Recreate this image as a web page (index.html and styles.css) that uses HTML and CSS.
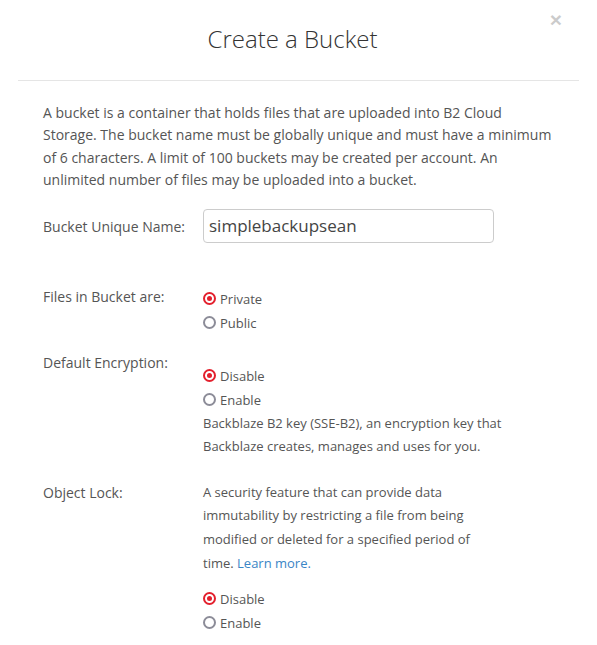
FILE: index.html
```html
<!DOCTYPE html>
<html lang="en">
<head>
<meta charset="utf-8">
<title>Create a Bucket</title>
<link rel="stylesheet" href="styles.css">
</head>
<body>
<div class="modal">
  <div class="modal-header">
    <h1 class="title">Create a Bucket</h1>
    <span class="close">×</span>
  </div>
  <div class="modal-body">
    <p class="intro">A bucket is a container that holds files that are uploaded into B2 Cloud Storage. The bucket name must be globally unique and must have a minimum of 6 characters. A limit of 100 buckets may be created per account. An unlimited number of files may be uploaded into a bucket.</p>

    <div class="row row-name">
      <div class="label">Bucket Unique Name:</div>
      <div class="control"><div class="input">simplebackupsean</div></div>
    </div>

    <div class="row row-files">
      <div class="label">Files in Bucket are:</div>
      <div class="control">
        <div class="radio"><span class="dot checked"></span>Private</div>
        <div class="radio"><span class="dot"></span>Public</div>
      </div>
    </div>

    <div class="row row-enc">
      <div class="label">Default Encryption:</div>
      <div class="control control-enc">
        <div class="radio"><span class="dot checked"></span>Disable</div>
        <div class="radio"><span class="dot"></span>Enable</div>
        <p class="desc desc-enc">Backblaze B2 key (SSE-B2), an encryption key that Backblaze creates, manages and uses for you.</p>
      </div>
    </div>

    <div class="row row-lock">
      <div class="label">Object Lock:</div>
      <div class="control">
        <p class="desc desc-lock">A security feature that can provide data immutability by restricting a file from being modified or deleted for a specified period of time. <a class="link" href="#">Learn more.</a></p>
        <div class="radios-lock">
          <div class="radio"><span class="dot checked"></span>Disable</div>
          <div class="radio"><span class="dot"></span>Enable</div>
        </div>
      </div>
    </div>
  </div>
</div>
</body>
</html>
```
FILE: styles.css
```css
* { box-sizing: border-box; }
html, body {
  margin: 0;
  padding: 0;
  background: #fff;
}
body {
  font-family: "Open Sans", "Liberation Sans", sans-serif;
  font-size: 14px;
  color: #555;
}
.modal {
  padding: 0 18px;
}
.modal-header {
  position: relative;
  height: 81px;
  border-bottom: 1px solid #e5e5e5;
  display: flex;
  justify-content: center;
}
.title {
  margin: 23px 12px 0 0;
  font-size: 24px;
  font-weight: 300;
  line-height: 32px;
  color: #333;
}
.close {
  position: absolute;
  right: 17px;
  top: 6px;
  font-size: 21px;
  font-weight: 700;
  line-height: 28px;
  color: #000;
  opacity: 0.2;
  font-family: "Liberation Sans", "Open Sans", sans-serif;
}
.modal-body {
  padding: 0 20px 0 25px;
}
.intro {
  margin: 21px 0 0;
  line-height: 22.4px;
}
.row {
  display: flex;
}
.label {
  width: 160px;
  flex: none;
  line-height: 20px;
}
.control {
  flex: 1;
  font-size: 13px;
}
.row-name {
  margin-top: 17px;
  align-items: center;
}
.row-name .label { margin-top: 3px; }
.input {
  width: 291px;
  height: 34px;
  border: 1px solid #ccc;
  border-radius: 4px;
  padding: 0 5px;
  font-size: 17px;
  line-height: 32px;
  color: #444;
}
.row-files { margin-top: 44px; }
.row-enc { margin-top: 18px; }
.control-enc { margin-top: 11px; }
.radio {
  display: flex;
  align-items: center;
  height: 24px;
  line-height: 24px;
}
.dot {
  width: 13px;
  height: 13px;
  border-radius: 50%;
  border: 2px solid #8c8c98;
  margin-right: 4px;
  flex: none;
  position: relative;
}
.dot.checked {
  border-color: #e3202d;
}
.dot.checked::after {
  content: "";
  position: absolute;
  left: 2px;
  top: 2px;
  width: 5px;
  height: 5px;
  border-radius: 50%;
  background: #e3202d;
}
.desc {
  margin: 0;
  line-height: 23px;
}
.desc-enc { width: 330px; }
.row-lock { margin-top: 25px; }
.desc-lock {
  width: 280px;
  line-height: 23.8px;
  margin-top: -2px;
}
.radios-lock { margin-top: 11px; }
.link {
  color: #3a85c6;
  text-decoration: none;
}
```
